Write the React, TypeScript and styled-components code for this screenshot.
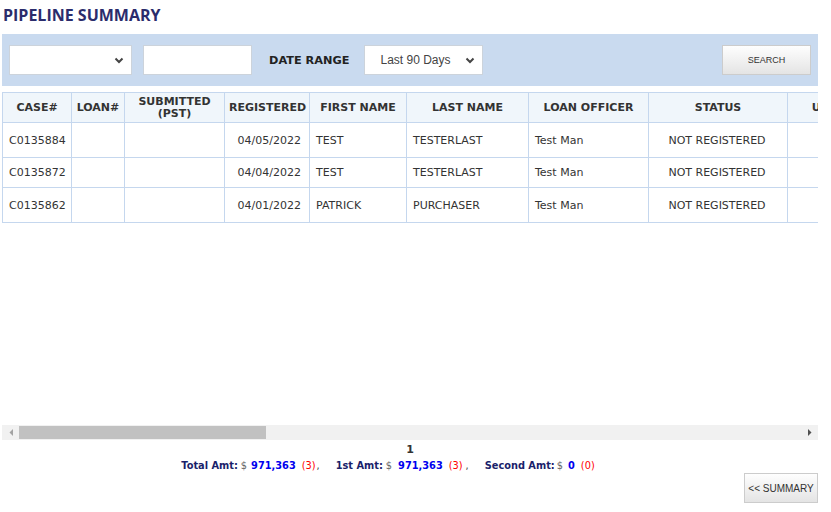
import React from "react";
import styled, { createGlobalStyle } from "styled-components";

const Global = createGlobalStyle`
  html, body { margin: 0; padding: 0; background: #fff; }
  body { font-family: "DejaVu Sans", Verdana, sans-serif; }
`;

const Page = styled.div`
  width: 816px;
  margin-left: 2px;
`;

const Title = styled.h1`
  margin: 0;
  padding: 4px 0 0 1px;
  height: 34px;
  box-sizing: border-box;
  font-family: "Open Sans", sans-serif;
  font-weight: 700;
  font-size: 16px;
  line-height: 22px;
  color: #2b2c6c;
`;

const FilterBar = styled.div`
  height: 52px;
  background: #c9daef;
  display: flex;
  align-items: center;
  padding: 0 7px;
  box-sizing: border-box;
`;

const Select = styled.div<{ $w: number }>`
  width: ${(p) => p.$w}px;
  height: 30px;
  box-sizing: border-box;
  background: #fff;
  border: 1px solid #ccd3db;
  display: flex;
  align-items: center;
  justify-content: space-between;
  padding: 0 7px 0 16px;
  font-family: "Liberation Sans", Arial, sans-serif;
  font-size: 12px;
  color: #444;
`;

const TextInput = styled.div`
  width: 109px;
  height: 30px;
  box-sizing: border-box;
  background: #fff;
  border: 1px solid #ccd3db;
  margin-left: 11px;
`;

const Label = styled.span`
  margin-left: 17px;
  margin-right: 14px;
  font-weight: 700;
  font-size: 11.3px;
  color: #222;
`;

const Button = styled.button`
  height: 30px;
  box-sizing: border-box;
  border: 1px solid #ccc;
  background: linear-gradient(#fefefe, #e4e4e4);
  font-family: "Liberation Sans", Arial, sans-serif;
  font-size: 9px;
  color: #333;
  padding: 0;
  cursor: pointer;
`;

const SearchButton = styled(Button)`
  width: 89px;
  margin-left: auto;
`;

const Scroller = styled.div`
  margin-top: 6px;
  height: 333px;
  overflow: hidden;
`;

const ScrollBar = styled.div`
  height: 15px;
  background: #f1f1f1;
  display: flex;
  align-items: stretch;
`;

const ScrollButton = styled.div`
  width: 17px;
  flex: none;
  display: flex;
  align-items: center;
  justify-content: center;
`;

const ScrollTrack = styled.div`
  flex: 1;
  display: flex;
  align-items: center;
`;

const ScrollThumb = styled.div`
  height: 13px;
  background: #c1c1c1;
`;

const Table = styled.table`
  border-collapse: collapse;
  table-layout: fixed;
`;

const Th = styled.th`
  background: #f0f6fb;
  border: 1px solid #c5d7ee;
  font-size: 11px;
  font-weight: 700;
  color: #333;
  height: 29px;
  padding: 0 4px;
  line-height: 12px;
  text-align: center;
`;

const Td = styled.td<{ $align?: string }>`
  border: 1px solid #c5d7ee;
  font-size: 11px;
  color: #333;
  padding: 0 8px 0 6px;
  text-align: ${(p) => p.$align || "left"};
  white-space: nowrap;
`;

const Tr = styled.tr<{ $h: number }>`
  height: ${(p) => p.$h}px;
`;

const Footer = styled.div`
  display: flex;
  flex-direction: column;
  align-items: center;
  margin-top: 2px;
`;

const PageNum = styled.div`
  font-size: 11px;
  font-weight: 700;
  color: #333;
  line-height: 15px;
`;

const Totals = styled.div`
  display: flex;
  align-items: baseline;
  font-size: 9.8px;
  line-height: 16px;
  padding: 1px 44px 0 0;
  white-space: nowrap;
`;

const Piece = styled.span<{ $ml?: number }>`
  margin-left: ${(p) => p.$ml ?? 0}px;
`;

const Lbl = styled(Piece)`
  font-weight: 700;
  color: #1a1f6b;
`;
const Dollar = styled(Piece)`
  color: #666;
`;
const Amt = styled(Piece)`
  font-weight: 700;
  color: #0000ee;
`;
const Cnt = styled(Piece)`
  color: #f00;
`;
const Sep = styled(Piece)`
  color: #444;
`;

const ButtonRow = styled.div`
  display: flex;
  justify-content: flex-end;
  margin-top: -1px;
`;

const SummaryButton = styled(Button)`
  width: 74px;
  font-size: 10px;
`;

const Chevron = () => (
  <svg width="10" height="7" viewBox="0 0 10 7">
    <path d="M1.5 1.5 L5 5 L8.5 1.5" stroke="#444" strokeWidth="2" fill="none" />
  </svg>
);

const Arrow = ({ dir, color }: { dir: "left" | "right"; color: string }) => (
  <svg width="4" height="7" viewBox="0 0 4 7">
    <path d={dir === "left" ? "M4 0 L0.5 3.5 L4 7 Z" : "M0 0 L3.5 3.5 L0 7 Z"} fill={color} />
  </svg>
);

const cols: [string, number][] = [
  ["CASE#", 69],
  ["LOAN#", 53],
  ["SUBMITTED (PST)", 100],
  ["REGISTERED", 85],
  ["FIRST NAME", 97],
  ["LAST NAME", 122],
  ["LOAN OFFICER", 120],
  ["STATUS", 139],
  ["UNDERWRITER", 140],
  ["PROPERTY ADDRESS", 260],
  ["CITY", 140],
  ["STATE", 80],
  ["ZIP", 90],
  ["LOAN AMOUNT", 140],
  ["LOAN TYPE", 140],
  ["PROGRAM", 200],
  ["RATE", 90],
  ["LOCK EXP", 120],
  ["CLOSING DATE", 140],
  ["PROCESSOR", 241],
];

const tableWidth = cols.reduce((s, [, w]) => s + w, 0);
const viewWidth = 816;
const trackWidth = viewWidth - 34;
const thumbWidth = Math.round((trackWidth * viewWidth) / tableWidth) - 2;

const rows = [
  ["C0135884", "04/05/2022", "TEST", "TESTERLAST", 35],
  ["C0135872", "04/04/2022", "TEST", "TESTERLAST", 30],
  ["C0135862", "04/01/2022", "PATRICK", "PURCHASER", 35],
] as const;

export default function App() {
  return (
    <>
      <Global />
      <Page>
        <Title>PIPELINE SUMMARY</Title>
        <FilterBar>
          <Select $w={123}>
            <span />
            <Chevron />
          </Select>
          <TextInput />
          <Label>DATE RANGE</Label>
          <Select $w={119}>
            <span>Last 90 Days</span>
            <Chevron />
          </Select>
          <SearchButton>SEARCH</SearchButton>
        </FilterBar>
        <Scroller>
          <Table style={{ width: tableWidth }}>
            <colgroup>
              {cols.map(([n, w]) => (
                <col key={n} style={{ width: w }} />
              ))}
            </colgroup>
            <thead>
              <tr>
                {cols.map(([n]) => (
                  <Th key={n}>
                    {n === "SUBMITTED (PST)" ? (
                      <>
                        SUBMITTED
                        <br />
                        (PST)
                      </>
                    ) : (
                      n
                    )}
                  </Th>
                ))}
              </tr>
            </thead>
            <tbody>
              {rows.map(([c, d, f, l, h]) => (
                <Tr key={c} $h={h}>
                  <Td>{c}</Td>
                  <Td />
                  <Td />
                  <Td $align="right">{d}</Td>
                  <Td>{f}</Td>
                  <Td>{l}</Td>
                  <Td>Test Man</Td>
                  <Td $align="center">NOT REGISTERED</Td>
                  {cols.slice(8).map(([n]) => (
                    <Td key={n} />
                  ))}
                </Tr>
              ))}
            </tbody>
          </Table>
        </Scroller>
        <ScrollBar>
          <ScrollButton>
            <Arrow dir="left" color="#a3a3a3" />
          </ScrollButton>
          <ScrollTrack>
            <ScrollThumb style={{ width: thumbWidth }} />
          </ScrollTrack>
          <ScrollButton>
            <Arrow dir="right" color="#505050" />
          </ScrollButton>
        </ScrollBar>
        <Footer>
          <PageNum>1</PageNum>
          <Totals>
            <Lbl>Total Amt:</Lbl>
            <Dollar $ml={3}>$</Dollar>
            <Amt $ml={4}>971,363</Amt>
            <Cnt $ml={6}>(3)</Cnt>
            <Sep $ml={1}>,</Sep>
            <Lbl $ml={16}>1st Amt:</Lbl>
            <Dollar $ml={3}>$</Dollar>
            <Amt $ml={6}>971,363</Amt>
            <Cnt $ml={6}>(3)</Cnt>
            <Sep $ml={3}>,</Sep>
            <Lbl $ml={16}>Second Amt:</Lbl>
            <Dollar $ml={2}>$</Dollar>
            <Amt $ml={5}>0</Amt>
            <Cnt $ml={6}>(0)</Cnt>
          </Totals>
        </Footer>
        <ButtonRow>
          <SummaryButton>&lt;&lt; SUMMARY</SummaryButton>
        </ButtonRow>
      </Page>
    </>
  );
}
